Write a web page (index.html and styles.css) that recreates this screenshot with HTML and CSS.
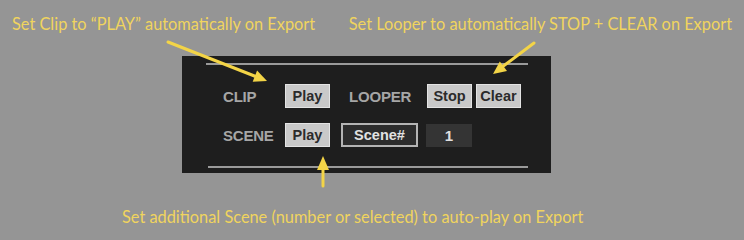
FILE: index.html
```html
<!DOCTYPE html>
<html>
<head>
<meta charset="utf-8">
<link rel="stylesheet" href="styles.css">
</head>
<body>
<div class="stage">
  <div class="captions-top">
    <span class="caption cap-clip">Set Clip to “PLAY” automatically on Export</span>
    <span class="caption cap-looper">Set Looper to automatically STOP + CLEAR on Export</span>
  </div>
  <div class="panel">
    <div class="rule"></div>
    <div class="rows">
      <div class="row">
        <span class="label">CLIP</span>
        <span class="btn">Play</span>
        <span class="label label-looper">LOOPER</span>
        <span class="btn">Stop</span>
        <span class="btn btn-next">Clear</span>
      </div>
      <div class="row">
        <span class="label">SCENE</span>
        <span class="btn">Play</span>
        <span class="toggle">Scene#</span>
        <span class="numbox">1</span>
      </div>
    </div>
    <div class="rule rule-bottom"></div>
  </div>
  <div class="caption cap-scene">Set additional Scene (number or selected) to auto-play on Export</div>
  <svg class="arrows" width="744" height="233" viewBox="0 0 744 233">
    <g stroke="#f3d447" stroke-width="3" stroke-linecap="round" fill="none">
      <line x1="168" y1="42" x2="257" y2="77"/>
      <line x1="534" y1="43" x2="502" y2="67"/>
      <line x1="323" y1="168" x2="323" y2="186"/>
    </g>
    <g fill="#f3d447">
      <polygon points="267,81 252.7,81.8 257.1,70.6"/>
      <polygon points="493,74 507,71 499.8,61.4"/>
      <polygon points="323,156 317,170 329,170"/>
    </g>
  </svg>
</div>
</body>
</html>
```

FILE: styles.css
```css
html, body {
  margin: 0;
  padding: 0;
  background: #959595;
}

.stage {
  position: relative;
  width: 744px;
  height: 233px;
  background: #959595;
  overflow: hidden;
  font-family: "Liberation Sans", Arial, sans-serif;
}

.caption {
  font-family: "Lato", "Liberation Sans", sans-serif;
  font-size: 16.35px;
  line-height: 20px;
  color: #f0d45e;
  white-space: nowrap;
}

.captions-top {
  display: flex;
  justify-content: space-between;
  padding: 14px 12px 0 12px;
  height: 20px;
}

.panel {
  margin: 22px 0 0 182px;
  width: 369px;
  height: 117px;
  box-sizing: border-box;
  background: #1e1e1e;
  padding: 7px 23px 0 24px;
  display: flex;
  flex-direction: column;
}

.rule {
  height: 2px;
  background: #9a9a9a;
}

.rule-bottom {
  margin-top: 19px;
  margin-left: 2px;
}

.rows {
  padding-left: 17px;
  margin-top: 19px;
  display: flex;
  flex-direction: column;
  gap: 15px;
}

.row {
  display: flex;
  align-items: center;
  height: 24px;
}

.label {
  width: 62px;
  font-size: 15px;
  font-weight: bold;
  color: #a6a6a6;
  letter-spacing: -0.2px;
}

.label-looper {
  width: 78px;
  margin-left: 19px;
}

.btn {
  box-sizing: border-box;
  width: 45px;
  height: 24px;
  background: #c9c9c9;
  border: 1px solid #e4e4e4;
  color: #2b2b2b;
  font-size: 14.5px;
  font-weight: bold;
  display: flex;
  align-items: center;
  justify-content: center;
}

.btn-next {
  margin-left: 4px;
}

.toggle {
  box-sizing: border-box;
  margin-left: 11px;
  width: 77px;
  height: 24px;
  background: #2c2c2c;
  border: 2px solid #b4b4b4;
  color: #e2e2e2;
  font-size: 14.5px;
  font-weight: bold;
  display: flex;
  align-items: center;
  justify-content: center;
}

.numbox {
  margin-left: 8px;
  width: 46px;
  height: 23px;
  background: #343434;
  color: #e0e0e0;
  font-size: 15px;
  font-weight: bold;
  display: flex;
  align-items: center;
  justify-content: center;
}

.cap-scene {
  margin: 34px 0 0 122px;
}

.arrows {
  position: absolute;
  left: 0;
  top: 0;
  pointer-events: none;
}
```
